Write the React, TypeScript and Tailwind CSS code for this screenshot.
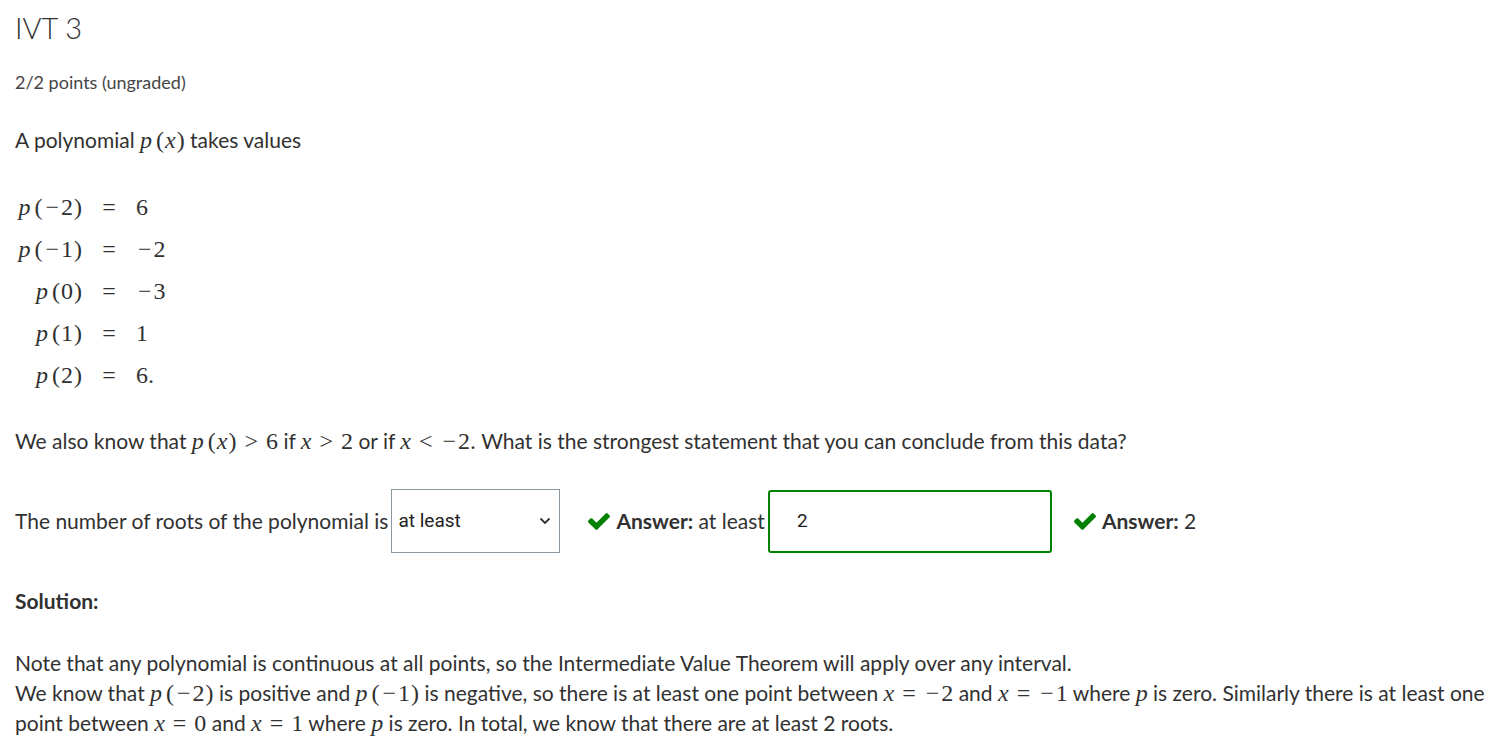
import type { ReactNode } from 'react';

const mathFont = "font-['Liberation_Serif','Times_New_Roman',serif] text-[24px] leading-none";

function M({ children }: { children: ReactNode }) {
  return <span className={mathFont}>{children}</span>;
}

function V({ c }: { c: string }) {
  return <i className="italic">{c}</i>;
}

// minus sign, a little wider like the TeX one
function Neg() {
  return <span className="px-[2px]">−</span>;
}

// p (arg) with the little gap KaTeX puts before \left(
function P({ arg }: { arg: ReactNode }) {
  return (
    <M>
      <V c="p" />
      <span className="ml-[4px] mr-[1px]">(</span>
      {arg}
      <span className="ml-[1px]">)</span>
    </M>
  );
}

function Rel({ s }: { s: string }) {
  return <span className="mx-[7px] px-[1px]">{s}</span>;
}

function Check() {
  return (
    <svg width="22" height="17" viewBox="121 334 1550 1188" className="inline-block" fill="#008100">
      <path d="M1671 566q0 40-28 68l-724 724-136 136q-28 28-68 28t-68-28l-136-136-362-362q-28-28-28-68t28-68l136-136q28-28 68-28t68 28l294 295 656-657q28-28 68-28t68 28l136 136q28 28 28 68z" />
    </svg>
  );
}

const rows: { arg: ReactNode; val: ReactNode; key: string }[] = [
  { key: 'a', arg: <><Neg />2</>, val: '6' },
  { key: 'b', arg: <><Neg />1</>, val: <><Neg />2</> },
  { key: 'c', arg: '0', val: <><Neg />3</> },
  { key: 'd', arg: '1', val: '1' },
  { key: 'e', arg: '2', val: '6.' },
];

export default function App() {
  return (
    <div className="min-h-screen bg-white px-[15px] text-[21px] text-[#313131] font-['Lato','Open_Sans',sans-serif]">
      <h2 className="text-[29px] font-light leading-[56px] text-[#313131]">IVT 3</h2>
      <div className="text-[18px] leading-[52px] text-[#454545]">2/2 points (ungraded)</div>

      <p className="leading-[64px] whitespace-nowrap">
        A polynomial <P arg={<V c="x" />} /> takes values
      </p>

      <div className="mt-[14px] grid grid-cols-[67px_54px_auto]">
        {rows.map((r) => (
          <div key={r.key} className="contents">
            <div className="flex h-[42px] items-center justify-end">
              <P arg={r.arg} />
            </div>
            <div className="flex h-[42px] items-center justify-center">
              <M>=</M>
            </div>
            <div className="flex h-[42px] items-center">
              <M>{r.val}</M>
            </div>
          </div>
        ))}
      </div>

      <p className="mt-[20px] leading-[50px] whitespace-nowrap">
        We also know that <P arg={<V c="x" />} />
        <M>
          <Rel s=">" />6
        </M>{' '}
        if{' '}
        <M>
          <V c="x" />
          <Rel s=">" />2
        </M>{' '}
        or if{' '}
        <M>
          <V c="x" />
          <Rel s="<" />
          <Neg />
          2.
        </M>{' '}
        What is the strongest statement that you can conclude from this data?
      </p>

      <div className="mt-[22px] flex h-[66px] items-center whitespace-nowrap">
        <span>The number of roots of the polynomial is</span>
        <div className="ml-[3px] flex h-[64px] w-[169px] items-center justify-between border border-[#8a979e] bg-white pl-[6px] pr-[8px] font-['Roboto',sans-serif] text-[19px] text-[#212121]">
          <span>at least</span>
          <svg width="12" height="8" viewBox="0 0 12 8" fill="none" stroke="#333" strokeWidth="1.8">
            <path d="M1.5 1.5 L6 6 L10.5 1.5" />
          </svg>
        </div>
        <span className="ml-[28px] flex items-center">
          <Check />
        </span>
        <span className="ml-[6px]">
          <b className="font-bold">Answer:</b> at least
        </span>
        <div className="ml-[3px] flex h-[63px] w-[284px] items-center rounded-[3px] border-2 border-[#008100] pl-[27px] font-['Roboto',sans-serif] text-[19px] text-[#212121]">
          2
        </div>
        <span className="ml-[22px] flex items-center">
          <Check />
        </span>
        <span className="ml-[6px]">
          <b className="font-bold">Answer:</b> 2
        </span>
      </div>

      <div className="mt-[26px] leading-[42px] font-bold">Solution:</div>

      <div className="mt-[26px] leading-[30px] whitespace-nowrap">
        <div>Note that any polynomial is continuous at all points, so the Intermediate Value Theorem will apply over any interval.</div>
        <div>
          We know that <P arg={<><Neg />2</>} /> is positive and <P arg={<><Neg />1</>} /> is negative, so there is at least one point
          between{' '}
          <M>
            <V c="x" />
            <Rel s="=" />
            <Neg />2
          </M>{' '}
          and{' '}
          <M>
            <V c="x" />
            <Rel s="=" />
            <Neg />1
          </M>{' '}
          where{' '}
          <M>
            <V c="p" />
          </M>{' '}
          is zero. Similarly there is at least one
        </div>
        <div>
          point between{' '}
          <M>
            <V c="x" />
            <Rel s="=" />0
          </M>{' '}
          and{' '}
          <M>
            <V c="x" />
            <Rel s="=" />1
          </M>{' '}
          where{' '}
          <M>
            <V c="p" />
          </M>{' '}
          is zero. In total, we know that there are at least 2 roots.
        </div>
      </div>
    </div>
  );
}
